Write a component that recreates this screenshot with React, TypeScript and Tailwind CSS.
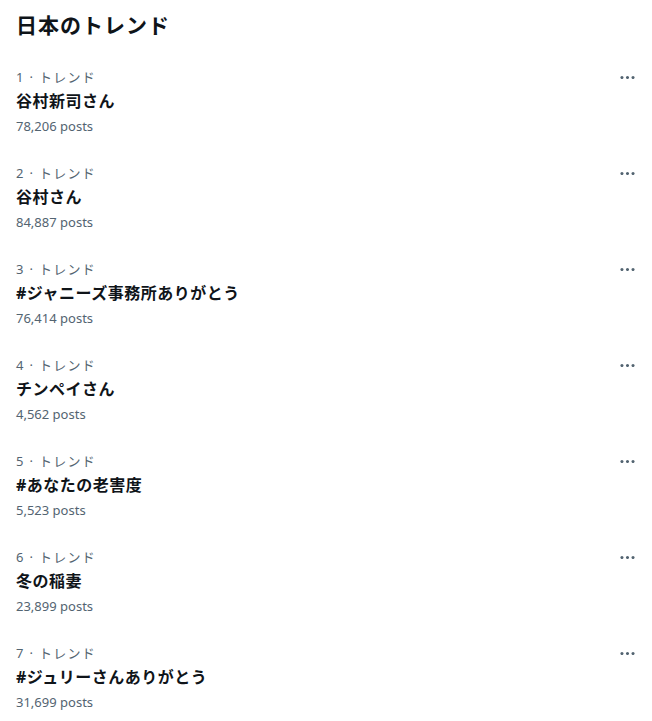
const trends = [
  { rank: 1, name: '谷村新司さん', posts: '78,206' },
  { rank: 2, name: '谷村さん', posts: '84,887' },
  { rank: 3, name: '#ジャニーズ事務所ありがとう', posts: '76,414' },
  { rank: 4, name: 'チンペイさん', posts: '4,562' },
  { rank: 5, name: '#あなたの老害度', posts: '5,523' },
  { rank: 6, name: '冬の稲妻', posts: '23,899' },
  { rank: 7, name: '#ジュリーさんありがとう', posts: '31,699' },
];

function MoreIcon() {
  return (
    <svg viewBox="0 0 24 24" className="w-[19px] h-[19px] fill-[#536471]">
      <path d="M3 12c0-1.1.9-2 2-2s2 .9 2 2-.9 2-2 2-2-.9-2-2zm9 2c1.1 0 2-.9 2-2s-.9-2-2-2-2 .9-2 2 .9 2 2 2zm7 0c1.1 0 2-.9 2-2s-.9-2-2-2-2 .9-2 2 .9 2 2 2z" />
    </svg>
  );
}

function TrendRow({ rank, name, posts }: { rank: number; name: string; posts: string }) {
  return (
    <div className="pl-4 pr-[15px] pt-3 pb-[15px]">
      <div className="flex items-center justify-between h-5">
        <span className="text-[13px] leading-5 tracking-[1.3px] text-[#536471]">{rank} · トレンド</span>
        <MoreIcon />
      </div>
      <div className="mt-[2px] text-[16px] leading-6 tracking-[0.5px] font-bold text-[#0f1419]">{name}</div>
      <div className="mt-[3px] text-[13px] leading-5 text-[#536471]">{posts} posts</div>
    </div>
  );
}

export default function App() {
  return (
    <div className="w-[652px] h-[721px] overflow-hidden bg-white font-['Noto_Sans','Noto_Sans_CJK_JP',sans-serif]">
      <div className="h-[55px] px-4 pt-[13px]">
        <h2 className="text-[21px] leading-6 tracking-[1px] font-bold text-[#0f1419]">日本のトレンド</h2>
      </div>
      {trends.map((t) => (
        <TrendRow key={t.rank} {...t} />
      ))}
    </div>
  );
}
